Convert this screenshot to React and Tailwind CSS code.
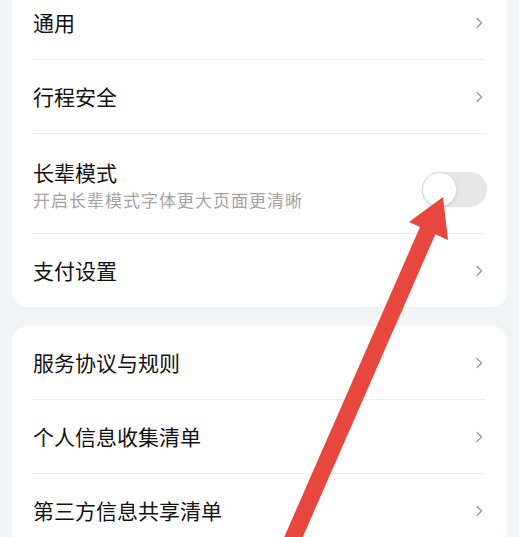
import React from 'react';

const font = { fontFamily: '"Noto Sans CJK SC", "Noto Sans", sans-serif' };

function Chevron() {
  return (
    <svg width="9" height="12" viewBox="0 0 9 12" className="shrink-0">
      <path d="M2 1.5 L6.5 6 L2 10.5" fill="none" stroke="#9a9a9a" strokeWidth="1.4" strokeLinecap="round" strokeLinejoin="round" />
    </svg>
  );
}

function Row({ title }) {
  return (
    <div className="h-[73px] flex items-center justify-between pl-[21px] pr-[23px]">
      <span className="text-[21px] text-[#111111] leading-none">{title}</span>
      <Chevron />
    </div>
  );
}

function Divider() {
  return <div className="h-px mx-[21px] bg-[#ececec]" />;
}

function App() {
  return (
    <div className="relative w-[519px] h-[537px] overflow-hidden bg-[#f3f4f6]" style={font}>
      <div className="px-3">
        <div className="bg-white rounded-b-2xl mt-[-14px]">
          <Row title="通用" />
          <Divider />
          <Row title="行程安全" />
          <Divider />
          <div className="h-[99px] flex items-center justify-between pl-[21px] pr-[20px]">
            <div className="flex flex-col gap-[8px] pt-[2px]">
              <span className="text-[21px] text-[#111111] leading-none">长辈模式</span>
              <span className="text-[17px] text-[#a3a3a3] leading-none tracking-[1px]">开启长辈模式字体更大页面更清晰</span>
            </div>
            <div className="relative w-[65px] h-[35px] rounded-full bg-[#e7e7e7] mt-[12px]">
              <div className="absolute left-0 top-0 w-[35px] h-[35px] rounded-full bg-white border border-[#dcdcdc] shadow-[0_1px_3px_rgba(0,0,0,0.12)]" />
            </div>
          </div>
          <Divider />
          <Row title="支付设置" />
        </div>

        <div className="bg-white rounded-2xl mt-[19px]">
          <Row title="服务协议与规则" />
          <Divider />
          <Row title="个人信息收集清单" />
          <Divider />
          <Row title="第三方信息共享清单" />
        </div>
      </div>

      <svg className="absolute inset-0 pointer-events-none" width="519" height="537" viewBox="0 0 519 537">
        <line x1="290" y1="545" x2="428" y2="230" stroke="#e8473d" strokeWidth="17" />
        <polygon points="443,197 409,222 448,240" fill="#e8473d" />
      </svg>
    </div>
  );
}

export default App;
